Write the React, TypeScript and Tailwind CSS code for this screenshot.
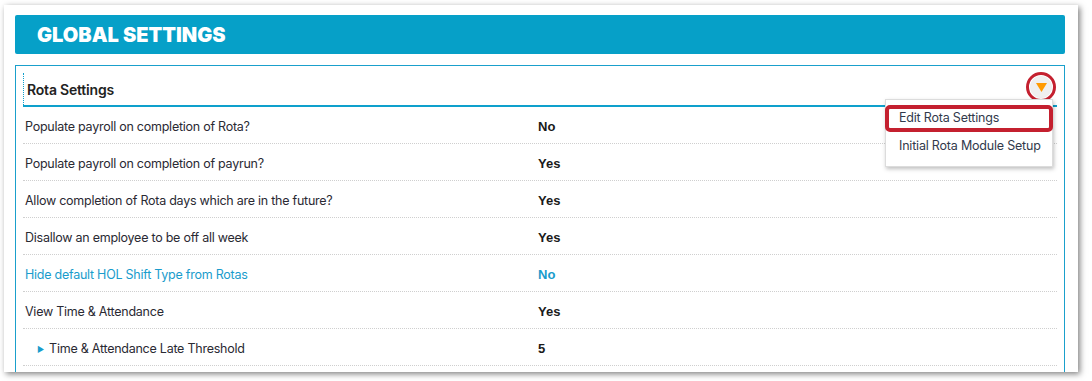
import React from "react";

const rows: { label: string; value: string; blue?: boolean; sub?: boolean }[] = [
  { label: "Populate payroll on completion of Rota?", value: "No" },
  { label: "Populate payroll on completion of payrun?", value: "Yes" },
  { label: "Allow completion of Rota days which are in the future?", value: "Yes" },
  { label: "Disallow an employee to be off all week", value: "Yes" },
  { label: "Hide default HOL Shift Type from Rotas", value: "No", blue: true },
  { label: "View Time & Attendance", value: "Yes" },
  { label: "Time & Attendance Late Threshold", value: "5", sub: true },
];

export default function App() {
  return (
    <div className="w-[1092px] h-[381px] bg-white overflow-hidden pt-[5px] pl-[4px]">
      <div className="w-[1074px] h-[367px] bg-white shadow-[2px_2px_6px_rgba(0,0,0,0.5)] pt-[10px] pl-[11px] overflow-hidden">
        <div className="w-[1050px] h-[39px] bg-[#06a0c8] rounded-[2px] flex items-center pl-[22px]">
          <span className="text-white text-[20px] font-black tracking-[0px] font-['Inter',sans-serif]">
            GLOBAL SETTINGS
          </span>
        </div>
        <div className="relative mt-[11px] w-[1050px] h-[320px] border border-[#1aa0cc] px-[7px] font-['Inter',sans-serif]">
          <div className="mt-[7px] h-[34px] border-b-2 border-[#0ea0cc] flex items-center pl-[4px]">
            <div className="absolute left-[7px] top-[7px] h-[32px] border-l border-dotted border-[#0ea0cc]" />
            <span className="text-[14px] font-semibold text-[#222] tracking-[-0.2px]">Rota Settings</span>
          </div>
          {rows.map((r) => (
            <div
              key={r.label}
              className="h-[37px] pt-[4px] border-b border-dotted border-[#cfcfcf] grid grid-cols-[513px_1fr] items-center pl-[2px]"
            >
              <span
                className={`text-[12.5px] tracking-[-0.25px] ${r.blue ? "text-[#1a9ccc]" : "text-[#2a2a33]"} flex items-center`}
              >
                {r.sub && (
                  <span className="ml-[12px] mr-[5px] text-[#1a9ccc] text-[8px] leading-none">▶</span>
                )}
                {r.label}
              </span>
              <span
                className={`text-[13px] font-bold font-['Liberation_Sans',sans-serif] ${
                  r.blue ? "text-[#1a9ccc]" : "text-[#1a1a1a]"
                }`}
              >
                {r.value}
              </span>
            </div>
          ))}

          <div className="absolute left-[1010px] top-[6px] w-[30px] h-[30px] rounded-full border-[3px] border-[#c4202f] bg-white flex items-center justify-center">
            <div className="w-[22px] h-[22px] rounded-full bg-[#efefef] flex items-center justify-center">
              <svg width="11" height="9" viewBox="0 0 11 9">
                <polygon points="0,0 11,0 5.5,9" fill="#ff9a00" />
              </svg>
            </div>
          </div>

          <div className="absolute left-[869px] top-[33px] w-[168px] h-[68px] bg-white border border-[#dcdcdc] shadow-[1px_2px_4px_rgba(0,0,0,0.25)] text-[12.5px] tracking-[-0.2px] text-[#323a4c]">
            <div className="mt-[5px] -ml-[1px] w-[168px] h-[27px] border-[4px] border-[#c4202f] rounded-[5px] flex items-center pl-[10px]">
              Edit Rota Settings
            </div>
            <div className="h-[29px] flex items-center pl-[13px]">Initial Rota Module Setup</div>
          </div>
        </div>
      </div>
    </div>
  );
}
